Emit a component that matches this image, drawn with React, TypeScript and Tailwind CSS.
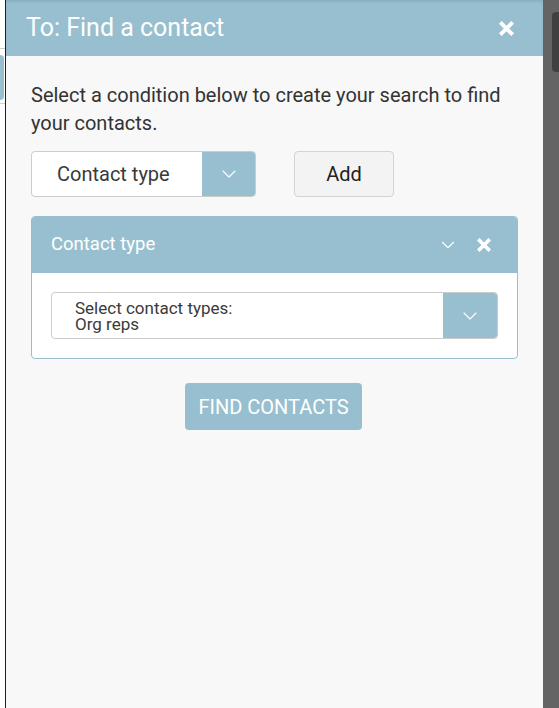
import { ChevronDown } from "lucide-react";

const FONT = { fontFamily: "Roboto, 'Liberation Sans', sans-serif" };

function CloseIcon({ size = 14 }: { size?: number }) {
  return (
    <svg width={size} height={size} viewBox="0 0 14 14" fill="none">
      <path d="M2.5 2.5 L11.5 11.5 M11.5 2.5 L2.5 11.5" stroke="white" strokeWidth="3.6" strokeLinecap="square" />
    </svg>
  );
}

export default function App() {
  return (
    <div className="flex h-[708px] w-[559px] overflow-hidden bg-white" style={FONT}>
      {/* page behind the drawer */}
      <div className="relative w-[5px] shrink-0 bg-white">
        <div className="absolute left-0 top-[48px] h-px w-full bg-[#cfcfcf]" />
        <div className="absolute left-0 top-[55px] h-[45px] w-[4px] rounded-r bg-[#97bfcf]" />
        <div className="absolute left-0 top-[103px] h-px w-full bg-[#cfcfcf]" />
      </div>
      <div className="w-px shrink-0 bg-[#1d1d2b]" />

      {/* drawer */}
      <div className="flex w-[537px] shrink-0 flex-col bg-[#f8f8f8]">
        <div className="flex h-[56px] items-center justify-between bg-[#97bfcf] pl-[20px] pr-[29px] shadow-[inset_0_2px_2px_rgba(0,0,0,0.08)]">
          <h1 className="text-[25px] font-normal text-white">To: Find a contact</h1>
          <button type="button" className="flex items-center">
            <CloseIcon size={15} />
          </button>
        </div>

        <div className="px-[25px] pt-[25px]">
          <p className="text-[20px] leading-[28px] text-[#333]">
            Select a condition below to create your search to find your contacts.
          </p>

          <div className="mt-[14px] flex items-center gap-[38px]">
            <div className="flex h-[46px] w-[225px] overflow-hidden rounded border border-[#cccccc] bg-white">
              <div className="flex flex-1 items-center pl-[25px] text-[20px] text-[#3a3a3a]">Contact type</div>
              <div className="flex w-[53px] items-center justify-center bg-[#97bfcf]">
                <ChevronDown size={24} strokeWidth={1.1} color="white" />
              </div>
            </div>
            <button
              type="button"
              className="h-[46px] w-[100px] rounded border border-[#d4d4d4] bg-[#f3f3f3] text-[20px] text-[#222]"
            >
              Add
            </button>
          </div>

          {/* condition card */}
          <div className="mt-[19px] overflow-hidden rounded border border-[#97bfcf] bg-white">
            <div className="flex h-[56px] items-center justify-between bg-[#97bfcf] pl-[19px] pr-[26px]">
              <span className="text-[18.5px] text-white">Contact type</span>
              <div className="flex items-center gap-[18px]">
                <ChevronDown size={22} strokeWidth={1.2} color="white" />
                <CloseIcon size={14} />
              </div>
            </div>
            <div className="px-[19px] pb-[19px] pt-[19px]">
              <div className="flex h-[47px] overflow-hidden rounded border border-[#cccccc] bg-white">
                <div className="flex flex-1 flex-col justify-center pl-[23px] text-[17px] leading-[16px] text-[#3a3a3a]">
                  <span>Select contact types:</span>
                  <span>Org reps</span>
                </div>
                <div className="flex w-[54px] items-center justify-center bg-[#97bfcf]">
                  <ChevronDown size={24} strokeWidth={1.1} color="white" />
                </div>
              </div>
            </div>
          </div>

          <div className="mt-[24px] flex justify-center">
            <button
              type="button"
              className="ml-[-2px] h-[47px] w-[177px] rounded bg-[#97bfcf] text-[20px] uppercase text-white"
            >
              Find contacts
            </button>
          </div>
        </div>
      </div>

      {/* scrollbar */}
      <div className="relative w-[16px] shrink-0 bg-[#646464]">
        <div className="absolute left-[9px] top-[12px] h-[60px] w-[10px] rounded bg-[#404040]" />
      </div>
    </div>
  );
}
